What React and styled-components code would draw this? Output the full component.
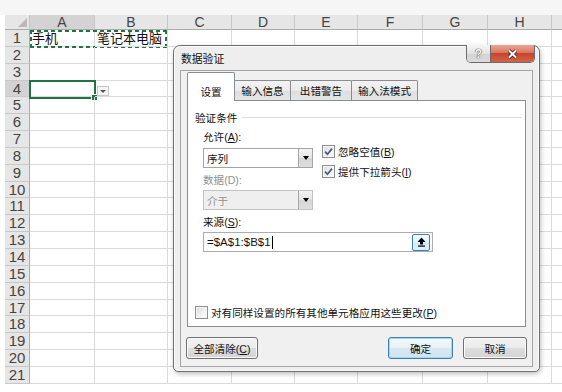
import React from 'react';
import styled, { createGlobalStyle } from 'styled-components';

const GlobalStyle = createGlobalStyle`
  html, body {
    margin: 0;
    padding: 0;
    background: #fff;
  }
  body {
    font-family: "Liberation Sans", "Noto Sans CJK SC", sans-serif;
  }
`;

const COL_LABELS = ['A', 'B', 'C', 'D', 'E', 'F', 'G', 'H', ''];
const ROW_COUNT = 21;

const Page = styled.div`
  position: relative;
  width: 562px;
  height: 392px;
  overflow: hidden;
  background: #fff;
  display: flex;
  flex-direction: column;
`;

const TopStrip = styled.div`
  flex: none;
  height: 15px;
  background: #f6f6f6;
`;

const Sheet = styled.div`
  margin-left: 5px;
  width: max-content;
  display: grid;
  grid-template-columns: 25px 65px 73px 64px 63px 63px 65px 65px 64px 64px;
  grid-template-rows: 15px repeat(${ROW_COUNT}, 16.85px);
`;

const Corner = styled.div`
  position: relative;
  box-sizing: border-box;
  background: #e6e6e6;
  border-right: 1px solid #c4c4c4;
  border-bottom: 1px solid #ababab;

  &::after {
    content: '';
    position: absolute;
    right: 2px;
    bottom: 2px;
    border-left: 9px solid transparent;
    border-bottom: 9px solid #b9b9b9;
  }
`;

const ColHead = styled.div`
  box-sizing: border-box;
  background: ${p => (p.$active ? '#d3d3d3' : '#e6e6e6')};
  border-right: 1px solid #c8c8c8;
  border-bottom: 1px solid #ababab;
  color: #444;
  font-size: 14px;
  line-height: 14px;
  text-align: center;
`;

const RowHead = styled.div`
  box-sizing: border-box;
  background: ${p => (p.$active ? '#d3d3d3' : '#e6e6e6')};
  border-right: 1px solid #ababab;
  border-bottom: 1px solid #c8c8c8;
  color: #444;
  font-size: 15px;
  line-height: 16px;
  text-align: center;
`;

const Cell = styled.div`
  position: relative;
  box-sizing: border-box;
  border-right: 1px solid #dadada;
  border-bottom: 1px solid #dadada;
  padding-left: 2px;
  font-family: "Noto Sans CJK SC", sans-serif;
  font-size: 13px;
  line-height: 16px;
  color: #111;
  white-space: nowrap;
`;

const Marquee = styled.div`
  position: absolute;
  left: 0;
  top: 0;
  width: 137px;
  height: 18px;
  pointer-events: none;
  background-image:
    repeating-linear-gradient(90deg, #217346 0 4px, transparent 4px 7px),
    repeating-linear-gradient(90deg, #217346 0 4px, transparent 4px 7px),
    repeating-linear-gradient(0deg, #217346 0 4px, transparent 4px 7px),
    repeating-linear-gradient(0deg, #217346 0 4px, transparent 4px 7px);
  background-size: 100% 2px, 100% 2px, 2px 100%, 2px 100%;
  background-position: 0 0, 0 100%, 0 0, 100% 0;
  background-repeat: no-repeat;
`;

const Selection = styled.div`
  position: absolute;
  left: -1px;
  top: -1px;
  width: 67px;
  height: 19px;
  box-sizing: border-box;
  border: 2px solid #217346;

  &::after {
    content: '';
    position: absolute;
    right: -4px;
    bottom: -4px;
    width: 5px;
    height: 5px;
    background: #217346;
    border: 1px solid #fff;
  }
`;

const DropBtn = styled.div`
  position: absolute;
  left: 2px;
  bottom: 0;
  width: 12px;
  height: 10px;
  box-sizing: border-box;
  border: 1px solid #c8c8c8;
  background: #f4f4f4;
  display: flex;
  align-items: center;
  justify-content: center;

  &::after {
    content: '';
    border-left: 3px solid transparent;
    border-right: 3px solid transparent;
    border-top: 3px solid #555;
  }
`;

/* dialog */

const Dialog = styled.div`
  position: absolute;
  left: 173px;
  top: 45px;
  width: 367px;
  height: 327px;
  box-sizing: border-box;
  border: 1px solid #6f6f6f;
  border-radius: 7px 7px 5px 5px;
  background: #eeeeee;
  box-shadow: inset 0 0 0 1px #fbfbfb, 1px 2px 5px rgba(0, 0, 0, 0.25);
  padding: 0 6px 4px;
  display: flex;
  flex-direction: column;
  font-family: "Liberation Sans", "Noto Sans CJK SC", sans-serif;
  font-size: 10.6px;
  color: #111;
  text-autospace: no-autospace;
`;

const TitleBar = styled.div`
  height: 24px;
  display: flex;
  align-items: center;
  padding-left: 1px;
  font-size: 10.8px;
`;

const CaptionButtons = styled.div`
  position: absolute;
  top: -1px;
  right: 4px;
  display: flex;
  border: 1px solid #6b6b6b;
  border-top: none;
  border-radius: 0 0 5px 5px;
  overflow: hidden;
`;

const HelpBtn = styled.div`
  width: 24px;
  height: 17px;
  box-sizing: border-box;
  border-right: 1px solid #6b6b6b;
  background: linear-gradient(#f6f6f6, #e2e2e2 50%, #d2d2d2 51%, #dcdcdc);
  display: flex;
  align-items: center;
  justify-content: center;
  font-weight: bold;
  font-size: 12px;
  color: #fff;
  text-shadow: 0 0 1px #333, 0 0 1px #333;
`;

const CloseBtn = styled.div`
  width: 43px;
  height: 17px;
  background: linear-gradient(#e8a799, #d8775f 45%, #c7452a 50%, #d0654a);
  display: flex;
  align-items: center;
  justify-content: center;
`;

const Client = styled.div`
  flex: 1;
  display: flex;
  flex-direction: column;
  border: 1px solid #a5a5a5;
  background: #f0f0f0;
  padding: 1px 6px 0;
`;

const TabStrip = styled.div`
  height: 28px;
  display: flex;
  align-items: flex-end;
`;

const Tab = styled.div`
  position: relative;
  z-index: ${p => (p.$active ? 2 : 0)};
  width: ${p => p.$w}px;
  height: ${p => (p.$active ? 29 : 20)}px;
  margin-bottom: ${p => (p.$active ? -1 : 0)}px;
  margin-left: ${p => (p.$first ? 0 : -1)}px;
  box-sizing: border-box;
  border: 1px solid #898c95;
  border-bottom: none;
  border-radius: 2px 2px 0 0;
  background: ${p => (p.$active ? '#fff' : 'linear-gradient(#f3f3f3, #ebebeb 50%, #dedede 51%, #e5e5e5)')};
  padding-top: ${p => (p.$active ? 8 : 0)}px;
  display: flex;
  align-items: center;
  justify-content: center;
`;

const Panel = styled.div`
  position: relative;
  z-index: 1;
  height: 227px;
  box-sizing: border-box;
  border: 1px solid #898c95;
  background: #fff;
  padding: 8px 3px 7px 7px;
  display: flex;
  flex-direction: column;
`;

const GroupHeader = styled.div`
  height: 16px;
  display: flex;
  align-items: center;

  &::after {
    content: '';
    flex: 1;
    margin-left: 5px;
    border-top: 1px solid #dcdcdc;
  }
`;

const Fields = styled.div`
  margin-left: 8px;
  display: flex;
  flex-direction: column;
`;

const TopRow = styled.div`
  display: flex;
`;

const LeftCol = styled.div`
  width: 110px;
  display: flex;
  flex-direction: column;
`;

const RightCol = styled.div`
  margin-left: 9px;
  padding-top: 19px;
  display: flex;
  flex-direction: column;
  gap: 6px;
`;

const Label = styled.div`
  height: 16px;
  line-height: 16px;
  margin-top: 4px;
  color: ${p => (p.$disabled ? '#8f8f8f' : '#111')};
`;

const U = styled.span`
  text-decoration: underline;
`;

const Select = styled.div`
  margin-top: ${p => p.$mt}px;
  width: 110px;
  height: 20px;
  box-sizing: border-box;
  border: 1px solid ${p => (p.$disabled ? '#c3c3c3' : '#a5a5a5')};
  background: ${p => (p.$disabled ? '#efefef' : '#fff')};
  color: ${p => (p.$disabled ? '#8f8f8f' : '#111')};
  display: flex;
  align-items: center;
  padding-left: 3px;
`;

const SelectText = styled.span`
  flex: 1;
`;

const SelectBtn = styled.span`
  width: 14px;
  height: 18px;
  box-sizing: border-box;
  border-left: 1px solid #a5a5a5;
  background: linear-gradient(#f4f4f4, #e4e4e4 50%, #d6d6d6 51%, #dedede);
  display: flex;
  align-items: center;
  justify-content: center;

  &::after {
    content: '';
    border-left: 3.5px solid transparent;
    border-right: 3.5px solid transparent;
    border-top: 4px solid #000;
  }
`;

const CheckRow = styled.div`
  height: 14px;
  display: flex;
  align-items: center;
  gap: 3px;
  white-space: nowrap;
  margin-top: ${p => (p.$bottom ? 'auto' : '0')};
`;

const Box = styled.span`
  flex: none;
  width: 13px;
  height: 13px;
  box-sizing: border-box;
  border: 1px solid #8e8f8f;
  background: linear-gradient(135deg, #d9d9d9, #f3f3f3 60%, #fff);
  box-shadow: inset 0 0 0 1px #f6f6f6;
  display: flex;
  align-items: center;
  justify-content: center;
`;

const Input = styled.div`
  margin-top: 2px;
  width: 230px;
  height: 20px;
  box-sizing: border-box;
  border: 1px solid #abadb3;
  background: #fff;
  display: flex;
  align-items: center;
  padding: 0 2px 0 3px;
  font-size: 11.5px;
`;

const Caret = styled.span`
  width: 1px;
  height: 13px;
  margin-left: 1px;
  background: #000;
`;

const CollapseBtn = styled.span`
  margin-left: auto;
  width: 18px;
  height: 17px;
  box-sizing: border-box;
  border: 1px solid #3c7fb1;
  border-radius: 2px;
  background: linear-gradient(#f4fafe, #e3f2fc 50%, #d2eafa 51%, #dff0fb);
  display: flex;
  align-items: center;
  justify-content: center;
`;

const ButtonRow = styled.div`
  margin: 10px -1px 0;
  display: flex;
  gap: 10px;
`;

const Button = styled.div`
  width: ${p => p.$w}px;
  height: 22px;
  box-sizing: border-box;
  border: 1px solid ${p => (p.$default ? '#3c7fb1' : '#707070')};
  border-radius: 3px;
  background: ${p =>
    p.$default
      ? 'linear-gradient(#f5f9fc, #e7f0f7 50%, #d9e7f2 51%, #d1e2f0)'
      : 'linear-gradient(#f2f2f2, #ebebeb 50%, #dddddd 51%, #d4d4d4)'};
  box-shadow: inset 0 0 0 1px ${p => (p.$default ? '#9fd8f5' : '#fbfbfb')};
  display: flex;
  align-items: center;
  justify-content: center;
  margin-left: ${p => (p.$push ? 'auto' : '0')};
`;

const Check = () => (
  <svg width="9" height="9" viewBox="0 0 9 9">
    <path d="M1 4.6 L3.5 7.2 L8 1.6" fill="none" stroke="#4a5a8e" strokeWidth="1.7" />
  </svg>
);

const Spreadsheet = () => {
  const items = [<Corner key="corner" />];
  COL_LABELS.forEach((label, i) => {
    items.push(
      <ColHead key={`c${i}`} $active={i === 0}>
        {label}
      </ColHead>
    );
  });

  for (let r = 1; r <= ROW_COUNT; r++) {
    items.push(
      <RowHead key={`r${r}`} $active={r === 4}>
        {r}
      </RowHead>
    );
    for (let c = 0; c < COL_LABELS.length; c++) {
      let content = null;
      if (r === 1 && c === 0) content = (<>手机<Marquee /></>);
      if (r === 1 && c === 1) content = '笔记本电脑';
      if (r === 4 && c === 0) content = <Selection />;
      if (r === 4 && c === 1) content = <DropBtn />;
      items.push(<Cell key={`${r}-${c}`}>{content}</Cell>);
    }
  }
  return <Sheet>{items}</Sheet>;
};

const ValidationDialog = () => (
  <Dialog>
    <TitleBar>数据验证</TitleBar>
    <CaptionButtons>
      <HelpBtn>?</HelpBtn>
      <CloseBtn>
        <svg width="13" height="10" viewBox="0 0 13 10">
          <path d="M3 1.5 L10 8.5 M10 1.5 L3 8.5" stroke="#4a1a10" strokeWidth="3.6" />
          <path d="M3 1.5 L10 8.5 M10 1.5 L3 8.5" stroke="#fff" strokeWidth="2" />
        </svg>
      </CloseBtn>
    </CaptionButtons>
    <Client>
      <TabStrip>
        <Tab $w={48} $active $first>设置</Tab>
        <Tab $w={57}>输入信息</Tab>
        <Tab $w={62}>出错警告</Tab>
        <Tab $w={67}>输入法模式</Tab>
      </TabStrip>
      <Panel>
        <GroupHeader>验证条件</GroupHeader>
        <Fields>
          <TopRow>
            <LeftCol>
              <Label>允许(<U>A</U>):</Label>
              <Select $mt={3}>
                <SelectText>序列</SelectText>
                <SelectBtn />
              </Select>
              <Label $disabled>数据(D):</Label>
              <Select $mt={2} $disabled>
                <SelectText>介于</SelectText>
                <SelectBtn />
              </Select>
            </LeftCol>
            <RightCol>
              <CheckRow>
                <Box><Check /></Box>
                <span>忽略空值(<U>B</U>)</span>
              </CheckRow>
              <CheckRow>
                <Box><Check /></Box>
                <span>提供下拉箭头(<U>I</U>)</span>
              </CheckRow>
            </RightCol>
          </TopRow>
          <Label>来源(<U>S</U>):</Label>
          <Input>
            =$A$1:$B$1
            <Caret />
            <CollapseBtn>
              <svg width="9" height="10" viewBox="0 0 9 10">
                <path d="M4.5 0.5 L8.5 5 H6 V7.5 H3 V5 H0.5 Z" fill="#000" />
                <rect x="1" y="8.5" width="7" height="1.2" fill="#000" />
              </svg>
            </CollapseBtn>
          </Input>
        </Fields>
        <CheckRow $bottom>
          <Box />
          <span>对有同样设置的所有其他单元格应用这些更改(<U>P</U>)</span>
        </CheckRow>
      </Panel>
      <ButtonRow>
        <Button $w={72}><span>全部清除(<U>C</U>)</span></Button>
        <Button $w={65} $default $push>确定</Button>
        <Button $w={64}>取消</Button>
      </ButtonRow>
    </Client>
  </Dialog>
);

const App = () => (
  <>
    <GlobalStyle />
    <Page>
      <TopStrip />
      <Spreadsheet />
      <ValidationDialog />
    </Page>
  </>
);

export default App;
